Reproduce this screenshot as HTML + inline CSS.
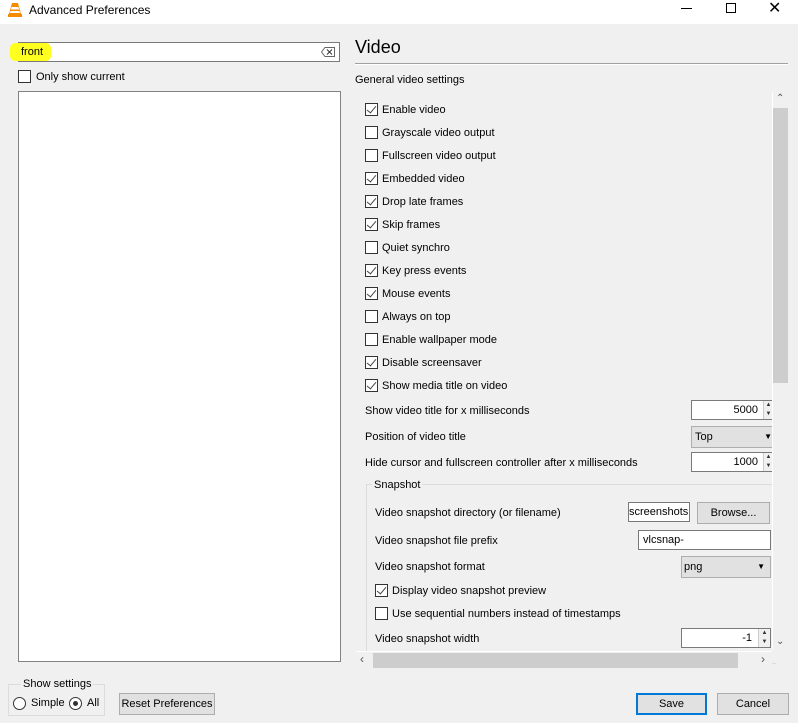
<!DOCTYPE html>
<html><head><style>
*{margin:0;padding:0;box-sizing:border-box}
body{width:798px;height:723px;background:#f0f0f0;font-family:"Liberation Sans",sans-serif;font-size:11px;color:#000;position:relative;overflow:hidden}
.a{position:absolute;white-space:nowrap}
.cb{position:absolute;width:13px;height:13px;border:1px solid #333;background:#fff}
.cb.c::after{content:"";position:absolute;left:3px;top:0px;width:4px;height:8px;border:solid #444;border-width:0 1.2px 1.2px 0;transform:rotate(40deg)}
.inp{position:absolute;background:#fff;border:1px solid #7a7a7a;height:20px;line-height:18px;padding:0 4px;white-space:nowrap}
.btn{position:absolute;background:#e1e1e1;border:1px solid #adadad;height:22px;line-height:20px;text-align:center;white-space:nowrap}
.spin{position:absolute;width:10px;height:18px;right:0;top:0;border-left:1px solid #ccc;font-size:6px;line-height:9px;text-align:center;color:#333;background:#f0f0f0}
</style></head><body>
<div class="a" style="left:0;top:0;width:798px;height:24px;background:#fff"></div>
<svg class="a" style="left:7px;top:1px" width="16" height="16" viewBox="0 0 16 16"><path d="M5 2h6l3 11H2z" fill="#f48b00"/><path d="M4.5 6h7l.6 2.5h-8.2z M3.5 10h9l.5 2h-10z" fill="#fff"/><rect x="1" y="13" width="14" height="3" fill="#f48b00"/></svg>
<div class="a" style="left:29px;top:3px;font-size:12px">Advanced Preferences</div>
<div class="a" style="left:681px;top:8px;width:11px;height:1px;background:#000"></div>
<div class="a" style="left:726px;top:3px;width:10px;height:10px;border:1px solid #000"></div>
<div class="a" style="left:768px;top:-2px;font-size:16px">✕</div>

<div class="inp" style="left:18px;top:42px;width:322px;height:20px"></div>
<div class="a" style="left:10px;top:43px;width:41px;height:18px;background:#ffff20;border-radius:5px"></div>
<div class="a" style="left:21px;top:46px">front</div>
<svg class="a" style="left:321px;top:47px" width="14" height="10" viewBox="0 0 14 10"><path d="M4 .5h9.5v9H4L.5 5z" fill="none" stroke="#666"/><path d="M6 2.5l5 5M11 2.5l-5 5" stroke="#333"/></svg>
<div class="cb" style="left:18px;top:70px"></div>
<div class="a" style="left:36px;top:71px">Only show current</div>
<div class="a" style="left:18px;top:91px;width:323px;height:571px;background:#fff;border:1px solid #828282"></div>

<div class="a" style="left:355px;top:37px;font-size:18px">Video</div>
<div class="a" style="left:355px;top:63px;width:433px;height:2px;border-top:1px solid #a0a0a0;border-bottom:1px solid #fff"></div>
<div class="a" style="left:355px;top:74px">General video settings</div>

<div class="cb c" style="left:365px;top:103px"></div><div class="a" style="left:382px;top:104px">Enable video</div>
<div class="cb" style="left:365px;top:126px"></div><div class="a" style="left:382px;top:127px">Grayscale video output</div>
<div class="cb" style="left:365px;top:149px"></div><div class="a" style="left:382px;top:150px">Fullscreen video output</div>
<div class="cb c" style="left:365px;top:172px"></div><div class="a" style="left:382px;top:173px">Embedded video</div>
<div class="cb c" style="left:365px;top:195px"></div><div class="a" style="left:382px;top:196px">Drop late frames</div>
<div class="cb c" style="left:365px;top:218px"></div><div class="a" style="left:382px;top:219px">Skip frames</div>
<div class="cb" style="left:365px;top:241px"></div><div class="a" style="left:382px;top:242px">Quiet synchro</div>
<div class="cb c" style="left:365px;top:264px"></div><div class="a" style="left:382px;top:265px">Key press events</div>
<div class="cb c" style="left:365px;top:287px"></div><div class="a" style="left:382px;top:288px">Mouse events</div>
<div class="cb" style="left:365px;top:310px"></div><div class="a" style="left:382px;top:311px">Always on top</div>
<div class="cb" style="left:365px;top:333px"></div><div class="a" style="left:382px;top:334px">Enable wallpaper mode</div>
<div class="cb c" style="left:365px;top:356px"></div><div class="a" style="left:382px;top:357px">Disable screensaver</div>
<div class="cb c" style="left:365px;top:379px"></div><div class="a" style="left:382px;top:380px">Show media title on video</div>

<div class="a" style="left:365px;top:405px">Show video title for x milliseconds</div>
<div class="inp" style="left:691px;top:400px;width:83px;text-align:right;padding-right:15px">5000<div class="spin">▲<br>▼</div></div>
<div class="a" style="left:365px;top:431px">Position of video title</div>
<div class="btn" style="left:691px;top:426px;width:86px;text-align:left;padding-left:3px">Top<span style="position:absolute;right:4px;font-size:8px">▼</span></div>
<div class="a" style="left:365px;top:457px">Hide cursor and fullscreen controller after x milliseconds</div>
<div class="inp" style="left:691px;top:452px;width:83px;text-align:right;padding-right:15px">1000<div class="spin">▲<br>▼</div></div>

<div class="a" style="left:366px;top:484px;width:410px;height:180px;border:1px solid #dcdcdc;border-right:none"></div>
<div class="a" style="left:372px;top:479px;background:#f0f0f0;padding:0 2px">Snapshot</div>
<div class="a" style="left:375px;top:507px">Video snapshot directory (or filename)</div>
<div class="inp" style="left:628px;top:502px;width:62px;padding:0 0 0 0;overflow:hidden">screenshots</div>
<div class="btn" style="left:697px;top:502px;width:73px">Browse...</div>
<div class="a" style="left:375px;top:535px">Video snapshot file prefix</div>
<div class="inp" style="left:638px;top:530px;width:133px">vlcsnap-</div>
<div class="a" style="left:375px;top:561px">Video snapshot format</div>
<div class="btn" style="left:681px;top:556px;width:90px;text-align:left;padding-left:2px">png<span style="position:absolute;right:5px;font-size:8px">▼</span></div>
<div class="cb c" style="left:375px;top:584px"></div><div class="a" style="left:392px;top:585px">Display video snapshot preview</div>
<div class="cb" style="left:375px;top:607px"></div><div class="a" style="left:392px;top:608px">Use sequential numbers instead of timestamps</div>
<div class="a" style="left:375px;top:633px">Video snapshot width</div>
<div class="inp" style="left:681px;top:628px;width:90px;text-align:right;padding-right:18px">-1<div class="spin" style="width:12px">▲<br>▼</div></div>

<div class="a" style="left:772px;top:92px;width:17px;height:558px;background:#f0f0f0;border-left:1px solid #fff"></div>
<div class="a" style="left:776px;top:93px;font-size:10px;color:#555">⌃</div>
<div class="a" style="left:773px;top:108px;width:15px;height:275px;background:#cdcdcd"></div>
<div class="a" style="left:776px;top:636px;font-size:10px;color:#555">⌄</div>
<div class="a" style="left:356px;top:651px;width:416px;height:16px;background:#f0f0f0;border-top:1px solid #fff"></div>
<div class="a" style="left:360px;top:652px;color:#555;font-size:12px">‹</div>
<div class="a" style="left:373px;top:653px;width:365px;height:15px;background:#cdcdcd"></div>
<div class="a" style="left:761px;top:652px;color:#555;font-size:12px">›</div>

<div class="a" style="left:8px;top:684px;width:97px;height:32px;border:1px solid #dcdcdc"></div>
<div class="a" style="left:21px;top:678px;background:#f0f0f0;padding:0 2px">Show settings</div>
<div class="a" style="left:13px;top:697px;width:13px;height:13px;border:1px solid #333;border-radius:50%;background:#fff"></div>
<div class="a" style="left:31px;top:697px">Simple</div>
<div class="a" style="left:69px;top:697px;width:13px;height:13px;border:1px solid #333;border-radius:50%;background:#fff"><div style="position:absolute;left:3px;top:3px;width:5px;height:5px;border-radius:50%;background:#333"></div></div>
<div class="a" style="left:87px;top:697px">All</div>
<div class="btn" style="left:119px;top:693px;width:96px">Reset Preferences</div>
<div class="btn" style="left:636px;top:693px;width:71px;border:2px solid #0078d7;line-height:18px">Save</div>
<div class="btn" style="left:717px;top:693px;width:72px">Cancel</div>
</body></html>
